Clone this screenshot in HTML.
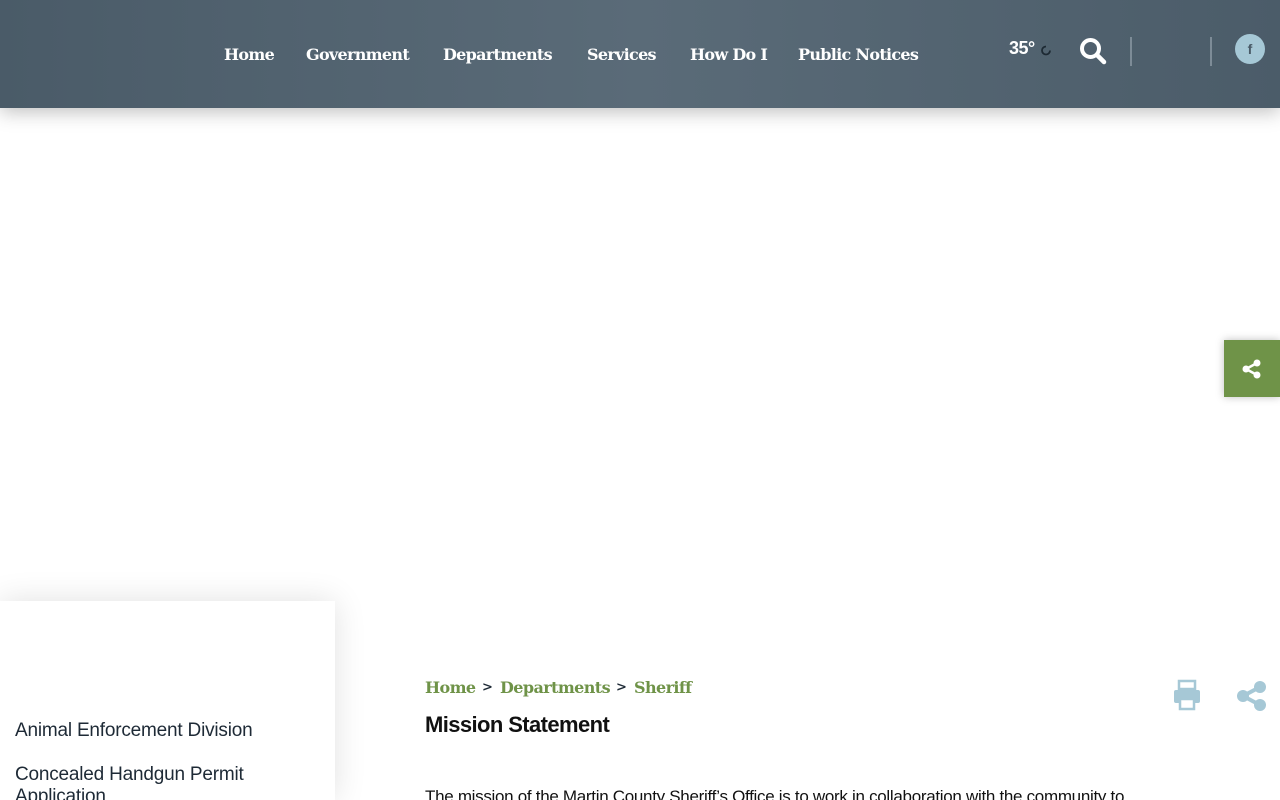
<!DOCTYPE html>
<html><head><meta charset="utf-8"><style>
html,body{margin:0;padding:0;width:1280px;height:800px;overflow:hidden;background:#fff;font-family:"Liberation Sans",sans-serif;position:relative}
.hdr{position:absolute;left:0;top:0;width:1280px;height:108px;background:linear-gradient(90deg,#4a5b68 0%,#5a6b78 50%,#4b5c69 100%);box-shadow:0 4px 18px rgba(0,0,0,.25)}
.nav{position:absolute;top:45px;font-family:"DejaVu Serif","Liberation Serif",serif;font-weight:bold;font-size:16px;color:#fff;letter-spacing:-.7px;white-space:nowrap}
.sep{position:absolute;top:37px;width:2px;height:29px;background:#7d8c97}
.side{position:absolute;left:0;top:601px;width:335px;height:199px;background:#fff;box-shadow:0 0 30px rgba(0,0,0,.12);overflow:hidden}
.side div{position:absolute;left:15px;font-size:19px;color:#1e2a36;letter-spacing:-.2px}
.bc{position:absolute;top:678px;font-family:"DejaVu Serif","Liberation Serif",serif;font-size:16px;font-weight:bold;color:#6f9348;letter-spacing:-.6px;white-space:nowrap}
</style></head><body>
<div class="hdr">
<div class="nav" style="left:224px">Home</div>
<div class="nav" style="left:306px">Government</div>
<div class="nav" style="left:443px">Departments</div>
<div class="nav" style="left:587px">Services</div>
<div class="nav" style="left:690px">How Do I</div>
<div class="nav" style="left:798px">Public Notices</div>
<div style="position:absolute;left:1009px;top:38px;color:#fff;font-weight:bold;font-size:18px;letter-spacing:-.5px">35°</div>
<svg style="position:absolute;left:1040px;top:44px" width="12" height="12" viewBox="0 0 12 12"><path d="M6 2.5A4 4 0 1 0 10 6.5" fill="none" stroke="#1d2a33" stroke-width="1.8"/></svg>
<svg style="position:absolute;left:1078px;top:36px" width="30" height="30" viewBox="0 0 30 30"><circle cx="12.5" cy="12.5" r="8.5" fill="none" stroke="#fff" stroke-width="4"/><line x1="19" y1="19" x2="26" y2="26" stroke="#fff" stroke-width="4.5" stroke-linecap="round"/></svg>
<div class="sep" style="left:1130px"></div>
<div class="sep" style="left:1210px"></div>
<div style="position:absolute;left:1235px;top:34px;width:30px;height:30px;border-radius:50%;background:#a6c8d6;color:#4a5b68;font-weight:bold;font-size:14px;text-align:center;line-height:30px">f</div>
</div>
<div style="position:absolute;left:1224px;top:340px;width:56px;height:57px;background:#6f9348;box-shadow:0 0 8px rgba(0,0,0,.25)">
<svg style="position:absolute;left:17px;top:18px" width="22" height="22" viewBox="0 0 22 22"><circle cx="16" cy="5" r="3.5" fill="#fff"/><circle cx="16" cy="17" r="3.5" fill="#fff"/><circle cx="5" cy="11" r="3.5" fill="#fff"/><path d="M5 11L16 5M5 11L16 17" stroke="#fff" stroke-width="2.5"/></svg></div>
<div class="side">
<div style="top:119px">Animal Enforcement Division</div>
<div style="top:163px;line-height:22px">Concealed Handgun Permit<br>Application</div>
</div>
<div class="bc" style="left:425px">Home</div>
<div class="bc" style="left:482px;color:#1e2a36;font-size:13px;top:680px">&gt;</div>
<div class="bc" style="left:500px">Departments</div>
<div class="bc" style="left:616px;color:#1e2a36;font-size:13px;top:680px">&gt;</div>
<div class="bc" style="left:634px">Sheriff</div>
<div style="position:absolute;left:425px;top:712px;font-size:22px;font-weight:bold;color:#111;letter-spacing:-.6px">Mission Statement</div>
<div style="position:absolute;left:425px;top:787px;font-size:17px;color:#111;white-space:nowrap;letter-spacing:-.3px">The mission of the Martin County Sheriff’s Office is to work in collaboration with the community to</div>
<svg style="position:absolute;left:1173px;top:679px" width="28" height="32" viewBox="0 0 28 32"><rect x="6" y="2" width="16" height="8" fill="none" stroke="#a6c8d6" stroke-width="2.5"/><rect x="1" y="11" width="26" height="13" rx="2" fill="#a6c8d6"/><rect x="7" y="20" width="14" height="10" fill="#fff" stroke="#a6c8d6" stroke-width="2.5"/></svg>
<svg style="position:absolute;left:1236px;top:680px" width="32" height="32" viewBox="0 0 32 32"><circle cx="24" cy="7" r="6" fill="#a6c8d6"/><circle cx="24" cy="25" r="6" fill="#a6c8d6"/><circle cx="7" cy="16" r="6" fill="#a6c8d6"/><path d="M7 16L24 7M7 16L24 25" stroke="#a6c8d6" stroke-width="4"/></svg>
</body></html>
